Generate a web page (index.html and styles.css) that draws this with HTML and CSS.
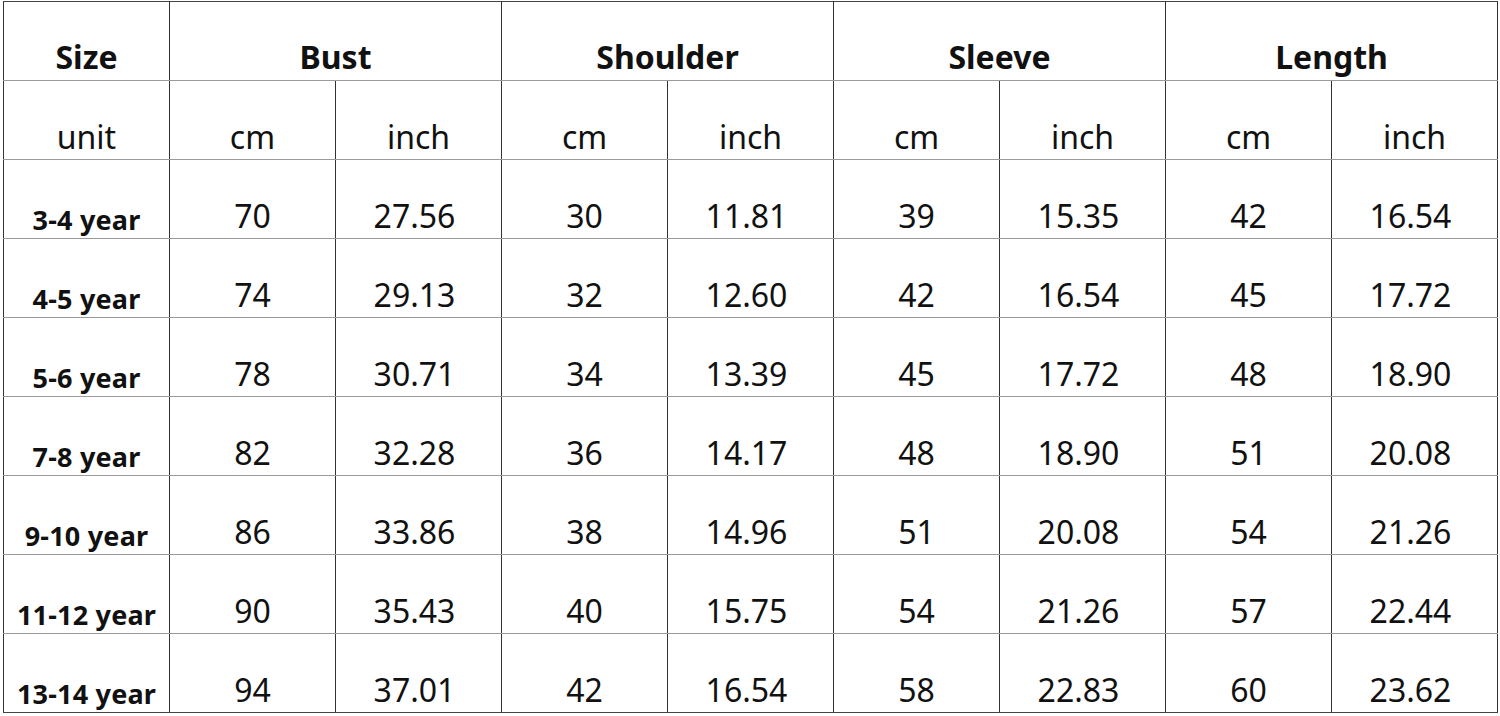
FILE: index.html
```html
<!DOCTYPE html>
<html>
<head>
<meta charset="utf-8">
<link rel="stylesheet" href="styles.css">
</head>
<body>
<table class="chart">
  <colgroup>
    <col class="c-first">
    <col class="c"><col class="c"><col class="c"><col class="c">
    <col class="c"><col class="c"><col class="c"><col class="c">
  </colgroup>
  <tr class="head">
    <td>Size</td>
    <td colspan="2">Bust</td>
    <td colspan="2">Shoulder</td>
    <td colspan="2">Sleeve</td>
    <td colspan="2">Length</td>
  </tr>
  <tr class="units">
    <td>unit</td>
    <td>cm</td><td>inch</td>
    <td>cm</td><td>inch</td>
    <td>cm</td><td>inch</td>
    <td>cm</td><td>inch</td>
  </tr>
  <tr class="row">
    <td class="label">3-4 year</td>
    <td>70</td><td>27.56</td><td>30</td><td>11.81</td><td>39</td><td>15.35</td><td>42</td><td>16.54</td>
  </tr>
  <tr class="row">
    <td class="label">4-5 year</td>
    <td>74</td><td>29.13</td><td>32</td><td>12.60</td><td>42</td><td>16.54</td><td>45</td><td>17.72</td>
  </tr>
  <tr class="row">
    <td class="label">5-6 year</td>
    <td>78</td><td>30.71</td><td>34</td><td>13.39</td><td>45</td><td>17.72</td><td>48</td><td>18.90</td>
  </tr>
  <tr class="row">
    <td class="label">7-8 year</td>
    <td>82</td><td>32.28</td><td>36</td><td>14.17</td><td>48</td><td>18.90</td><td>51</td><td>20.08</td>
  </tr>
  <tr class="row">
    <td class="label">9-10 year</td>
    <td>86</td><td>33.86</td><td>38</td><td>14.96</td><td>51</td><td>20.08</td><td>54</td><td>21.26</td>
  </tr>
  <tr class="row">
    <td class="label">11-12 year</td>
    <td>90</td><td>35.43</td><td>40</td><td>15.75</td><td>54</td><td>21.26</td><td>57</td><td>22.44</td>
  </tr>
  <tr class="row last">
    <td class="label">13-14 year</td>
    <td>94</td><td>37.01</td><td>42</td><td>16.54</td><td>58</td><td>22.83</td><td>60</td><td>23.62</td>
  </tr>
</table>
</body>
</html>
```
FILE: styles.css
```css
html, body {
  margin: 0;
  padding: 0;
  background: #ffffff;
}

.chart {
  margin: 1px 0 0 3px;
  border-collapse: collapse;
  table-layout: fixed;
  width: 1493px;
  font-family: "Noto Sans", "Open Sans", sans-serif;
  color: #111111;
}

.c-first { width: 166px; }
.c { width: 166px; }

.chart tr {
  height: 79px;
}

.chart td {
  border-left: 1px solid #333333;
  border-right: 1px solid #333333;
  border-top: 1px solid #9a9a9a;
  border-bottom: 1px solid #9a9a9a;
  padding: 0 0 6px 0;
  text-align: center;
  vertical-align: bottom;
  font-size: 32px;
  line-height: 32px;
  white-space: nowrap;
}

.chart tr.row td:nth-child(2n+3) {
  padding-right: 8px;
}

.chart tr.head td {
  border-top: 1px solid #444444;
  font-weight: bold;
  padding-bottom: 7px;
}

.chart tr.last td {
  border-bottom: 1px solid #444444;
}

.chart td.label {
  font-size: 27px;
  line-height: 27px;
  font-weight: bold;
  letter-spacing: 0.2px;
  padding-bottom: 5px;
}
```
